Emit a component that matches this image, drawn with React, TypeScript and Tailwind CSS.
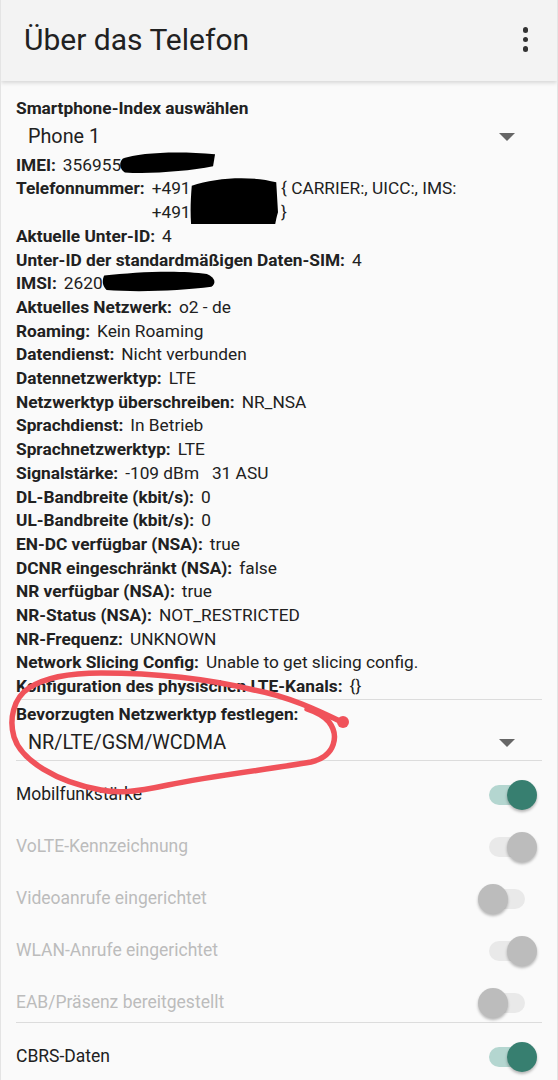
import React from "react";

const Redact = ({ children, path, cls }: { children: React.ReactNode; path: string; cls: string }) => (
  <span className="relative">
    {children}
    <svg className={`absolute pointer-events-none ${cls}`} viewBox="0 0 100 60" preserveAspectRatio="none">
      <path d={path} fill="#000" />
    </svg>
  </span>
);

const Row = ({ label, children }: { label: string; children: React.ReactNode }) => (
  <div className="flex gap-[7px]">
    <span className="font-bold whitespace-nowrap">{label}</span>
    <span className="min-w-0">{children}</span>
  </div>
);

const Toggle = ({ on, disabled }: { on: boolean; disabled?: boolean }) => {
  const track = disabled ? "bg-[#e9e9e9]" : "bg-[#b4d6d0]";
  const thumb = disabled ? "bg-[#bcbcbc]" : "bg-[#377f70]";
  return (
    <div className="relative w-[59px] h-[30px]">
      <div className={`absolute left-[11px] top-[5px] w-[36px] h-[20px] rounded-full ${track}`} />
      <div
        className={`absolute top-0 ${on ? "left-[29px]" : "left-0"} w-[30px] h-[30px] rounded-full ${thumb} shadow-[0_2px_3px_rgba(0,0,0,0.28)]`}
      />
    </div>
  );
};

const Arrow = () => (
  <svg width="16" height="8" viewBox="0 0 16 8">
    <path d="M0 0 L16 0 L8 8 Z" fill="#666" />
  </svg>
);

export default function App() {
  const sw = [
    { t: "Mobilfunkstärke", on: true, d: false },
    { t: "VoLTE-Kennzeichnung", on: true, d: true },
    { t: "Videoanrufe eingerichtet", on: false, d: true },
    { t: "WLAN-Anrufe eingerichtet", on: true, d: true },
    { t: "EAB/Präsenz bereitgestellt", on: false, d: true },
  ];
  return (
    <div
      className="relative w-[558px] h-[1080px] overflow-hidden bg-[#fafafa] text-[#212121] border-x border-[#e4e4e4]"
      style={{ fontFamily: "Roboto, 'Noto Sans', sans-serif" }}
    >
      <header className="relative z-10 h-[81px] bg-[#f3f3f3] flex items-center justify-between pl-[23px] pr-[29px] shadow-[0_2px_4px_rgba(0,0,0,0.14)]">
        <h1 className="text-[30px] leading-none text-[#212121] -mt-[2px]">Über das Telefon</h1>
        <div className="flex flex-col gap-[4px] -mt-[2px]">
          <span className="w-[5.5px] h-[5.5px] rounded-full bg-[#333]" />
          <span className="w-[5.5px] h-[5.5px] rounded-full bg-[#333]" />
          <span className="w-[5.5px] h-[5.5px] rounded-full bg-[#333]" />
        </div>
      </header>

      <main className="pl-[15px] pr-[15px] pt-[16px] text-[17.3px] leading-[23.7px]">
        <div className="font-bold">Smartphone-Index auswählen</div>
        <div className="h-[33px] flex items-center justify-between pl-[12px] pr-[27px]">
          <span className="text-[19.8px]">Phone 1</span>
          <Arrow />
        </div>

        <Row label="IMEI:">
          356955
          <Redact cls="-left-[2px] -top-[6px] w-[98px] h-[26px]" path="M4 22 C20 8, 60 4, 98 12 L96 40 C70 52, 30 58, 6 54 C0 46, 0 30, 4 22 Z">
            <span className="opacity-0">000000000</span>
          </Redact>
        </Row>
        <Row label="Telefonnummer:">
          <div>
            +491
            <Redact cls="-left-[1px] -top-[4px] w-[88px] h-[50px]" path="M2 14 C30 4, 70 2, 98 10 L100 46 C96 60, 96 70, 92 84 L86 98 L82 80 C60 84, 30 86, 4 82 C0 60, 0 40, 2 14 Z">
              <span className="opacity-0">000000000</span>
            </Redact>
            <span className="ml-[3px]">{"{ CARRIER:, UICC:, IMS:"}</span>
          </div>
          <div>
            +491<span className="opacity-0">000000000</span>
            <span className="ml-[3px]">{"}"}</span>
          </div>
        </Row>
        <Row label="Aktuelle Unter-ID:">4</Row>
        <Row label="Unter-ID der standardmäßigen Daten-SIM:">4</Row>
        <Row label="IMSI:">
          2620
          <Redact cls="-left-[1px] -top-[3px] w-[114px] h-[24px]" path="M2 14 C30 4, 70 0, 92 10 C100 20, 100 34, 96 42 C70 52, 30 56, 4 50 C0 40, 0 24, 2 14 Z">
            <span className="opacity-0">0000000000</span>
          </Redact>
        </Row>
        <Row label="Aktuelles Netzwerk:">o2 - de</Row>
        <Row label="Roaming:">Kein Roaming</Row>
        <Row label="Datendienst:">Nicht verbunden</Row>
        <Row label="Datennetzwerktyp:">LTE</Row>
        <Row label="Netzwerktyp überschreiben:">NR_NSA</Row>
        <Row label="Sprachdienst:">In Betrieb</Row>
        <Row label="Sprachnetzwerktyp:">LTE</Row>
        <Row label="Signalstärke:">
          <span className="whitespace-pre">-109 dBm   31 ASU</span>
        </Row>
        <Row label="DL-Bandbreite (kbit/s):">0</Row>
        <Row label="UL-Bandbreite (kbit/s):">0</Row>
        <Row label="EN-DC verfügbar (NSA):">true</Row>
        <Row label="DCNR eingeschränkt (NSA):">false</Row>
        <Row label="NR verfügbar (NSA):">true</Row>
        <Row label="NR-Status (NSA):">NOT_RESTRICTED</Row>
        <Row label="NR-Frequenz:">UNKNOWN</Row>
        <Row label="Network Slicing Config:">Unable to get slicing config.</Row>
        <Row label="Konfiguration des physischen LTE-Kanals:">{"{}"}</Row>

        <div className="h-px bg-[#dcdcdc]" />
        <div className="pt-[3px] font-bold">Bevorzugten Netzwerktyp festlegen:</div>
        <div className="h-[33px] flex items-center justify-between pl-[12px] pr-[27px]">
          <span className="text-[19.8px]">NR/LTE/GSM/WCDMA</span>
          <Arrow />
        </div>
        <div className="h-px bg-[#dcdcdc]" />

        <div className="flex flex-col gap-[14px] pt-[15px]">
          {sw.map((s) => (
            <div key={s.t} className="h-[38px] flex items-center justify-between pr-[5px]">
              <span className={`text-[17.5px] ${s.d ? "text-[#bcbcbc]" : "text-[#212121]"}`}>{s.t}</span>
              <Toggle on={s.on} disabled={s.d} />
            </div>
          ))}
        </div>
        <div className="h-px bg-[#dcdcdc]" />
        <div className="mt-[15px] h-[38px] flex items-center justify-between pr-[5px]">
          <span className="text-[17.5px]">CBRS-Daten</span>
          <Toggle on={true} />
        </div>
      </main>

      <svg className="absolute inset-0 pointer-events-none z-20" width="558" height="1080" viewBox="0 0 558 1080">
        <path
          d="M343 723 C320 712, 290 697, 253 690 C220 682, 170 673, 100 673 C70 673, 43 678, 28 688 C12 698, 8 720, 13 737 C20 760, 55 782, 100 790 C115 793, 130 793, 167 785 C210 776, 270 769, 310 762 C335 756, 338 735, 328 722 C322 715, 315 712, 306 709"
          fill="none"
          stroke="#f0525a"
          strokeWidth="5.5"
          strokeLinecap="round"
          strokeLinejoin="round"
        />
        <circle cx="342" cy="722" r="6" fill="#f0525a" />
      </svg>
    </div>
  );
}
